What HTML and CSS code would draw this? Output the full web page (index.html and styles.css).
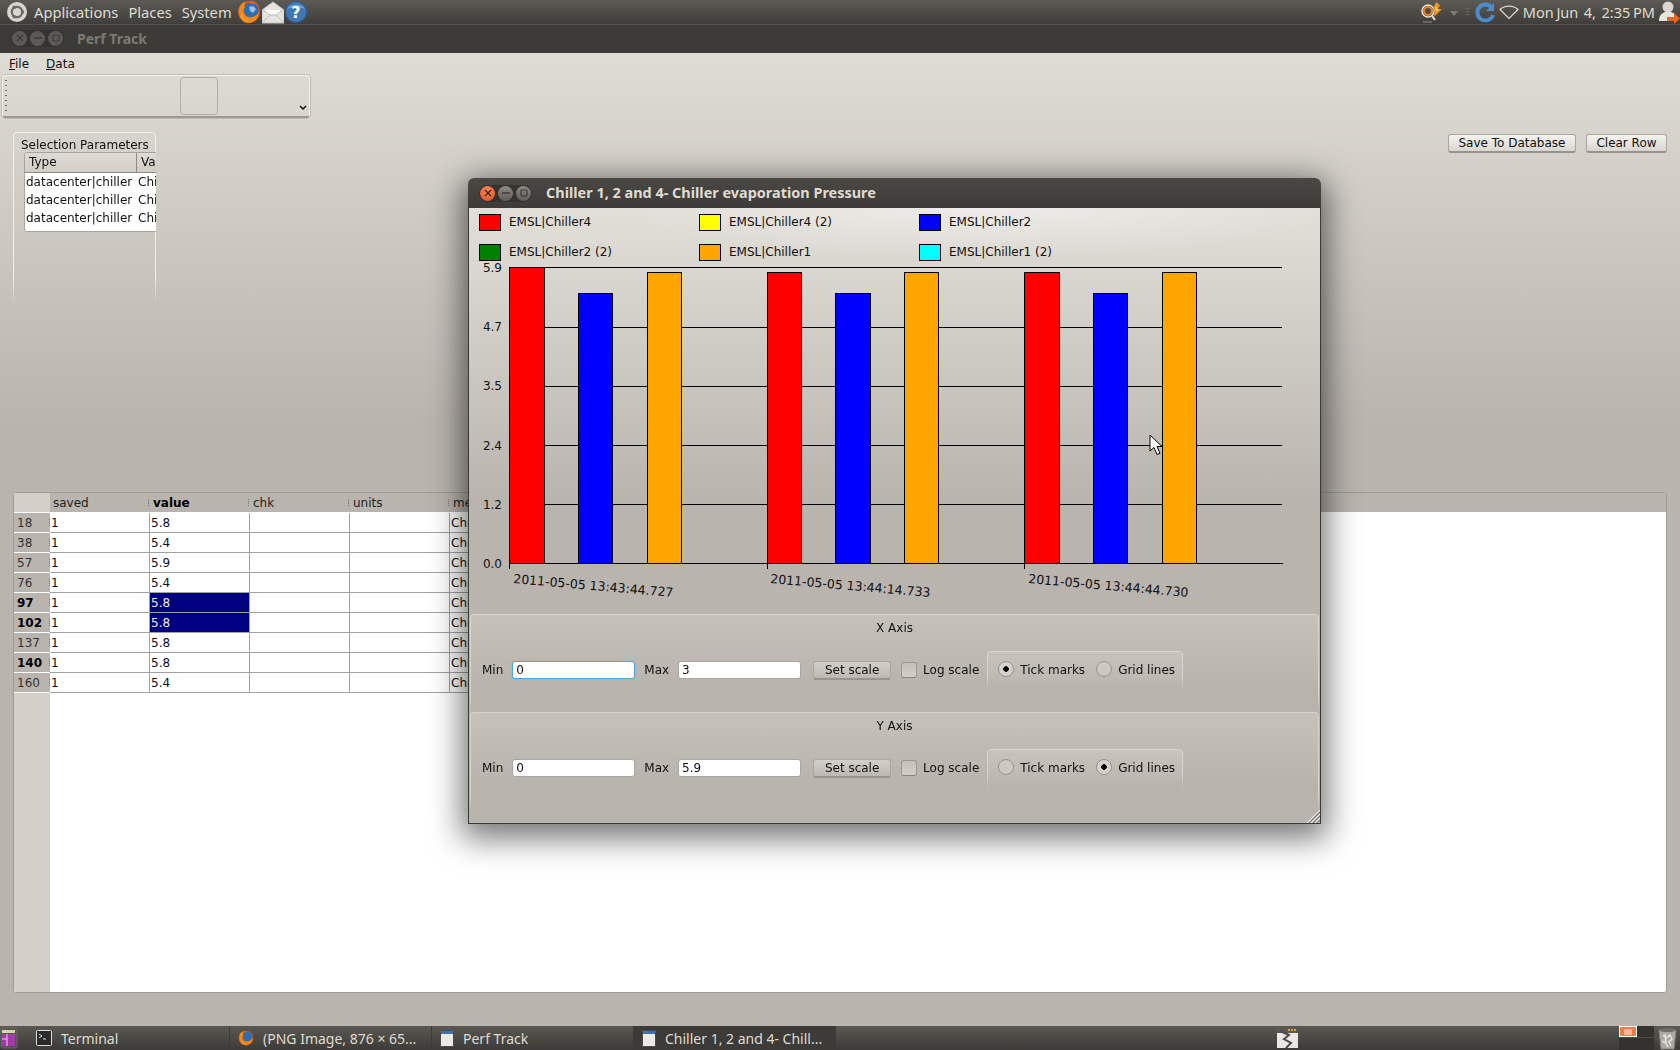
FILE: index.html
```html
<!DOCTYPE html>
<html lang="en-US">
<head>
	<meta charset="UTF-8">
	<title>Perf Track</title>
	<link rel="stylesheet" href="styles.css">
</head>
<body>

<!-- gnome top panel -->
<div class="panel">
	<svg class="ubuntu" width="24" height="24" viewBox="0 0 24 24"><circle cx="12" cy="12" r="10" fill="#d8d5ce"/><circle cx="12" cy="12" r="5.2" fill="none" stroke="#6a6862" stroke-width="2.2"/><circle cx="17.5" cy="12" r="1.7" fill="#6a6862"/><circle cx="9.2" cy="7.2" r="1.7" fill="#6a6862"/><circle cx="9.2" cy="16.8" r="1.7" fill="#6a6862"/></svg>
	<span class="panel-menu">Applications</span>
	<span class="panel-menu">Places</span>
	<span class="panel-menu">System</span>
	<svg class="launcher launcher-first" width="24" height="24" viewBox="0 0 24 24"><circle cx="12" cy="12" r="11" fill="#d9541a"/><circle cx="14" cy="10" r="7.500" fill="#2e6db4"/><path d="M12 7l4-1 3 3-3 4-3-2z" fill="#9fc3e2"/><path d="M2 11C2 5 6 2 9 2 7 4 7 6 8 7 6 9 6 13 9 16c4 3 10 1 13-4 0 6-5 11-11 11C6 23 2 18 2 11z" fill="#f08a1d"/><path d="M12 1c4-1 9 2 11 7-3-4-6-5-9-4z" fill="#e8601a"/><path d="M4 12c0 5 3 8 7 9-3 0-6-2-7-5z" fill="#f7c64a"/></svg>
	<svg class="launcher" width="22" height="24" viewBox="0 0 22 24"><path d="M0 10L11 2l11 8v13H0z" fill="#e6e4df" stroke="#c8c6c0"/><path d="M4 10h14v3l-5 2H9l-5-2z" fill="#fbfbf9"/><path d="M1 22l7-7h6l7 7M1 10l7 5M21 10l-7 5" fill="none" stroke="#bdbcb7"/></svg>
	<svg class="launcher" width="22" height="24" viewBox="0 0 22 24"><circle cx="11" cy="12" r="10.500" fill="#3f78b4" stroke="#2c5c90"/><path d="M2 9a10 8 0 0 1 18 0c-5-2-13-2-18 0z" fill="#6fa0d2"/><text x="11" y="18" class="help-mark">?</text></svg>

	<div class="panel-right">
		<svg width="24" height="22" viewBox="0 0 24 22"><circle cx="8" cy="10" r="6" fill="none" stroke="#e6e2d8" stroke-width="1.500"/><circle cx="8" cy="10" r="4" fill="none" stroke="#e9821e" stroke-width="2"/><path d="M12 15l3 4" stroke="#e6e2d8" stroke-width="2"/><path d="M3 21h9" stroke="#8e8c86"/><path d="M16 1l-4 9h3l-1 6 8-8h-4l2-4z" fill="#f0951c"/><path d="M16 5l-1 4h2l-1 2 3-3h-2z" fill="#fbe08a"/></svg>
		<span class="drop-arrow"></span>
		<span class="panel-grip"></span>
		<svg width="20" height="22" viewBox="0 0 20 22"><path d="M17 7a8 8 0 1 0 1 7" fill="none" stroke="#4d8ccb" stroke-width="4"/><path d="M11 10h8V2z" fill="#4d8ccb"/></svg>
		<svg class="wifi" width="20" height="16" viewBox="0 0 20 16"><path d="M1 5.500C6 1 14 1 19 5.500L10 14.500z" fill="none" stroke="#dcd8ce" stroke-width="1.200"/></svg>
		<span class="clock">Mon Jun  4,  2:35 PM</span>
		<svg width="22" height="24" viewBox="0 0 22 24"><circle cx="10" cy="7" r="5.500" fill="#d8d6d0"/><path d="M1 21c0-6 3-8 6-9h6c3 1 6 3 6 9z" fill="#e6e4df"/><path d="M9 17h7v-4l6 5.500-6 5.500v-3H9z" fill="#e2682a"/></svg>
	</div>
</div>

<!-- main window -->
<div class="titlebar">
	<div class="wm-buttons wm-off">
		<span class="wm-btn"><svg width="8" height="8" viewBox="0 0 8 8"><path d="M1 1l6 6M7 1L1 7" stroke="#3c3b37" stroke-width="1.200"/></svg></span>
		<span class="wm-btn"><svg width="8" height="8" viewBox="0 0 8 8"><path d="M0 4h8" stroke="#3c3b37" stroke-width="1.500"/></svg></span>
		<span class="wm-btn"><svg width="8" height="8" viewBox="0 0 8 8"><rect x="1" y="1" width="6" height="6" rx="1" fill="none" stroke="#3c3b37" stroke-width="1.200"/></svg></span>
	</div>
	<span class="title-off">Perf Track</span>
</div>

<div class="mainwin">
	<div class="menubar">
		<span class="menu-item"><u>F</u>ile</span>
		<span class="menu-item"><u>D</u>ata</span>
	</div>

	<div class="toolbar">
		<span class="tool-grip"></span>
		<span class="tool-btn"></span>
		<svg class="tool-more" width="8" height="6" viewBox="0 0 8 6"><path d="M1 1l3 3 3-3" fill="none" stroke="#111" stroke-width="1.500"/></svg>
	</div>

	<div class="upper">
		<div class="params">
			<div class="params-title">Selection Parameters</div>
			<div class="params-table">
				<div class="pt-head"><span class="pt-type">Type</span><span class="pt-val">Val</span></div>
				<div class="pt-row"><span class="pt-type">datacenter|chiller</span><span class="pt-val">Chi</span></div>
				<div class="pt-row"><span class="pt-type">datacenter|chiller</span><span class="pt-val">Chi</span></div>
				<div class="pt-row"><span class="pt-type">datacenter|chiller</span><span class="pt-val">Chi</span></div>
			</div>
		</div>
		<div class="actions">
			<button class="btn btn-save">Save To Database</button>
			<button class="btn btn-clear">Clear Row</button>
		</div>
	</div>

	<div class="datagrid">
		<div class="dg-head">
			<span class="dg-corner"></span>
			<span class="dg-col">saved</span>
			<span class="dg-col dg-col-on">value</span>
			<span class="dg-col">chk</span>
			<span class="dg-col">units</span>
			<span class="dg-col">me</span>
			<span class="dg-fill"></span>
		</div>
		<div class="dg-row"><span class="dg-num">18</span><span class="dg-cell">1</span><span class="dg-cell">5.8</span><span class="dg-cell"></span><span class="dg-cell"></span><span class="dg-cell">Chi</span></div>
		<div class="dg-row"><span class="dg-num">38</span><span class="dg-cell">1</span><span class="dg-cell">5.4</span><span class="dg-cell"></span><span class="dg-cell"></span><span class="dg-cell">Chi</span></div>
		<div class="dg-row"><span class="dg-num">57</span><span class="dg-cell">1</span><span class="dg-cell">5.9</span><span class="dg-cell"></span><span class="dg-cell"></span><span class="dg-cell">Chi</span></div>
		<div class="dg-row"><span class="dg-num">76</span><span class="dg-cell">1</span><span class="dg-cell">5.4</span><span class="dg-cell"></span><span class="dg-cell"></span><span class="dg-cell">Chi</span></div>
		<div class="dg-row"><span class="dg-num dg-num-on">97</span><span class="dg-cell">1</span><span class="dg-cell dg-sel">5.8</span><span class="dg-cell"></span><span class="dg-cell"></span><span class="dg-cell">Chi</span></div>
		<div class="dg-row"><span class="dg-num dg-num-on">102</span><span class="dg-cell">1</span><span class="dg-cell dg-sel">5.8</span><span class="dg-cell"></span><span class="dg-cell"></span><span class="dg-cell">Chi</span></div>
		<div class="dg-row"><span class="dg-num">137</span><span class="dg-cell">1</span><span class="dg-cell">5.8</span><span class="dg-cell"></span><span class="dg-cell"></span><span class="dg-cell">Chi</span></div>
		<div class="dg-row"><span class="dg-num dg-num-on">140</span><span class="dg-cell">1</span><span class="dg-cell">5.8</span><span class="dg-cell"></span><span class="dg-cell"></span><span class="dg-cell">Chi</span></div>
		<div class="dg-row"><span class="dg-num">160</span><span class="dg-cell">1</span><span class="dg-cell">5.4</span><span class="dg-cell"></span><span class="dg-cell"></span><span class="dg-cell">Chi</span></div>
		<div class="dg-rest"><span class="dg-rest-side"></span></div>
	</div>
</div>

<!-- bottom panel -->
<div class="taskbar">
	<svg class="show-desktop" width="18" height="24" viewBox="0 0 18 24"><rect x="1" y="2" width="16" height="20" rx="2" fill="#55534e" stroke="#6b6964"/><rect x="2" y="4" width="13" height="3" fill="#d8d6a8"/><rect x="2" y="8" width="13" height="12" fill="#a23aa8"/><path d="M7 8v12M2 13h5" stroke="#e9cbe9"/></svg>
	<span class="task-grip"></span>
	<div class="task">
		<svg width="16" height="16" viewBox="0 0 16 16"><rect x=".5" y=".5" width="15" height="15" rx="1" fill="#2b2b2b" stroke="#ddd"/><path d="M3 4l3 2-3 2M7 9h3" stroke="#ddd" fill="none"/></svg>
		<span>Terminal</span>
	</div>
	<div class="task">
		<svg width="16" height="18" viewBox="0 0 24 24"><circle cx="12" cy="12" r="11" fill="#d9541a"/><circle cx="14" cy="10" r="7.500" fill="#2e6db4"/><path d="M2 11C2 5 6 2 9 2 7 4 7 6 8 7 6 9 6 13 9 16c4 3 10 1 13-4 0 6-5 11-11 11C6 23 2 18 2 11z" fill="#f08a1d"/></svg>
		<span>(PNG Image, 876 × 65...</span>
	</div>
	<div class="task">
		<svg width="14" height="17" viewBox="0 0 14 17"><rect x=".5" y=".5" width="13" height="16" rx="1" fill="#eceae6" stroke="#4a4945"/><rect x="1" y="1" width="12" height="3" fill="#3f72b8"/></svg>
		<span>Perf Track</span>
	</div>
	<div class="task task-on">
		<svg width="14" height="17" viewBox="0 0 14 17"><rect x=".5" y=".5" width="13" height="16" rx="1" fill="#eceae6" stroke="#4a4945"/><rect x="1" y="1" width="12" height="3" fill="#3f72b8"/></svg>
		<span>Chiller 1, 2 and 4- Chill...</span>
	</div>
	<div class="task-right">
		<svg class="zigzag" width="21" height="20" viewBox="0 0 21 20"><rect width="21" height="20" fill="#e9e8e4"/><rect width="21" height="5" fill="#5a5853"/><rect x="11" y="1" width="2" height="2" fill="#e0a040"/><rect x="14" y="1" width="2" height="2" fill="#e0a040"/><rect x="17" y="1" width="2" height="2" fill="#e0a040"/><path d="M3 3l9 4-5 4 7 4-5 5" fill="none" stroke="#4c4b47" stroke-width="2"/></svg>
		<div class="workspaces">
			<span class="ws ws-on"><i></i></span><span class="ws"></span>
			<span class="ws"></span><span class="ws"></span>
		</div>
		<svg width="19" height="23" viewBox="0 0 19 23"><path d="M1 3h17l-2 19H3z" fill="#a9a8a3" stroke="#85847f"/><ellipse cx="9.500" cy="3" rx="8.500" ry="2" fill="#6f6e69"/><path d="M5 8l3 3 4-3 2 4-3 3 2 4M4 14l4 2 2 4M7 7l1 9" fill="none" stroke="#e4e3de" stroke-width="1.500"/></svg>
	</div>
</div>

<!-- chart dialog, a window on the desktop -->
<div class="dialog">
	<div class="dlg-title">
		<div class="wm-buttons">
			<span class="wm-btn wm-close"><svg width="8" height="8" viewBox="0 0 8 8"><path d="M1 1l6 6M7 1L1 7" stroke="#3c2015" stroke-width="1.300"/></svg></span>
			<span class="wm-btn wm-mid"><svg width="8" height="8" viewBox="0 0 8 8"><path d="M0 4h8" stroke="#3c3b37" stroke-width="1.500"/></svg></span>
			<span class="wm-btn wm-mid"><svg width="8" height="8" viewBox="0 0 8 8"><rect x="1" y="1" width="6" height="6" rx="1" fill="none" stroke="#3c3b37" stroke-width="1.200"/></svg></span>
		</div>
		<span class="title-on">Chiller 1, 2 and 4- Chiller evaporation Pressure</span>
	</div>
	<div class="dlg-body">
		<div class="legend">
			<div class="lg-item"><span class="swatch c-red"></span>EMSL|Chiller4</div>
			<div class="lg-item"><span class="swatch c-yellow"></span>EMSL|Chiller4 (2)</div>
			<div class="lg-item"><span class="swatch c-blue"></span>EMSL|Chiller2</div>
			<div class="lg-item"><span class="swatch c-green"></span>EMSL|Chiller2 (2)</div>
			<div class="lg-item"><span class="swatch c-orange"></span>EMSL|Chiller1</div>
			<div class="lg-item"><span class="swatch c-cyan"></span>EMSL|Chiller1 (2)</div>
		</div>

		<svg class="chart" width="849" height="354" viewBox="470 260 849 354" shape-rendering="crispEdges">
			<g stroke="#000" fill="none">
				<path d="M509.500 267.500H1282M509.500 327.500H1282M509.500 386.500H1282M509.500 445.500H1282M509.500 504.500H1282"/>
				<path d="M509.500 563.500H1283M509.500 563v6M767.500 563v6M1024.500 563v6"/>
				<rect x="509.500" y="267.500" width="35" height="296" fill="#f00"/>
				<rect x="578.500" y="293.500" width="34" height="270" fill="#00f"/>
				<rect x="647.500" y="272.500" width="34" height="291" fill="#ffa500"/>
				<rect x="767.500" y="272.500" width="34" height="291" fill="#f00"/>
				<rect x="835.500" y="293.500" width="35" height="270" fill="#00f"/>
				<rect x="904.500" y="272.500" width="34" height="291" fill="#ffa500"/>
				<rect x="1024.500" y="272.500" width="35" height="291" fill="#f00"/>
				<rect x="1093.500" y="293.500" width="34" height="270" fill="#00f"/>
				<rect x="1162.500" y="272.500" width="34" height="291" fill="#ffa500"/>
			</g>
			<g class="ylabels">
				<text x="502" y="272">5.9</text>
				<text x="502" y="331">4.7</text>
				<text x="502" y="390">3.5</text>
				<text x="502" y="450">2.4</text>
				<text x="502" y="509">1.2</text>
				<text x="502" y="568">0.0</text>
			</g>
			<g class="xlabels">
				<text transform="translate(513 583) rotate(5)">2011-05-05 13:43:44.727</text>
				<text transform="translate(770 583) rotate(5)">2011-05-05 13:44:14.733</text>
				<text transform="translate(1028 583) rotate(5)">2011-05-05 13:44:44.730</text>
			</g>
		</svg>

		<div class="axisbox">
			<div class="axis-title">X Axis</div>
			<div class="axis-row">
				<label class="lbl">Min</label><input class="field field-focus" value="0">
				<label class="lbl lbl-max">Max</label><input class="field" value="3">
				<button class="btn btn-scale">Set scale</button>
				<input type="checkbox" class="check"><span class="lbl">Log scale</span>
				<div class="radios">
					<input type="radio" name="xmode" class="radio" checked><span class="lbl">Tick marks</span>
					<input type="radio" name="xmode" class="radio"><span class="lbl">Grid lines</span>
				</div>
			</div>
		</div>

		<div class="axisbox">
			<div class="axis-title">Y Axis</div>
			<div class="axis-row">
				<label class="lbl">Min</label><input class="field" value="0">
				<label class="lbl lbl-max">Max</label><input class="field" value="5.9">
				<button class="btn btn-scale">Set scale</button>
				<input type="checkbox" class="check"><span class="lbl">Log scale</span>
				<div class="radios">
					<input type="radio" name="ymode" class="radio"><span class="lbl">Tick marks</span>
					<input type="radio" name="ymode" class="radio" checked><span class="lbl">Grid lines</span>
				</div>
			</div>
		</div>

		<svg class="resize-grip" width="14" height="14" viewBox="0 0 14 14"><path d="M14 1L1 14M14 5L5 14M14 9L9 14" stroke="#f2f0ec" stroke-width="1"/><path d="M14 3L3 14M14 7L7 14M14 11L11 14" stroke="#77746e" stroke-width="1"/></svg>
	</div>
</div>

<svg class="cursor" width="14" height="22" viewBox="0 0 14 22"><path d="M1 1v16l4-3.500 3 7 3-1.200-3-6.800h5z" fill="#fff" stroke="#000" stroke-width="1"/></svg>

</body>
</html>
```

FILE: styles.css
```css
* {
box-sizing: border-box;
}

html, body {
height: 100%;
}

body {
margin: 0;
display: flex;
flex-direction: column;
overflow: hidden;
font-family: "DejaVu Sans", sans-serif;
font-size: 12px;
color: #111;
background: #b9b4ae;
}

/* top panel */
.panel {
display: flex;
align-items: center;
flex: 0 0 24px;
padding-left: 5px;
font-family: "Noto Sans", sans-serif;
font-size: 14.700px;
color: #dfdbd2;
background: linear-gradient(#5c5a55, #3f3e3a);
}

.ubuntu {
margin-right: 5px;
}

.panel-menu {
margin-right: 10px;
}

.launcher {
margin-right: 1px;
}

.launcher-first {
margin-left: -5px;
}

.help-mark {
font: bold 16px "DejaVu Sans", sans-serif;
text-anchor: middle;
fill: #fff;
}

.panel-right {
display: flex;
align-items: center;
gap: 3px;
margin-left: auto;
}

.drop-arrow {
width: 0;
height: 0;
margin: 3px 2px 0 3px;
border: 4px solid transparent;
border-top: 5px solid #7d7b75;
border-bottom: 0;
}

.panel-grip {
width: 3px;
height: 8px;
margin: 0 3px;
background: repeating-linear-gradient(#6e6c66 0 1px, transparent 1px 3px);
}

.wifi {
margin: 0 1px;
}

.clock {
font-size: 14.500px;
white-space: pre;
word-spacing: -1px;
}

/* window titles */
.titlebar {
display: flex;
align-items: center;
flex: 0 0 29px;
padding-bottom: 2px;
background: #3c3b37;
border-top: 1px solid #55534e;
}

.wm-buttons {
display: flex;
gap: 3px;
margin-left: 11px;
padding: 1px;
border-radius: 9px;
background: #34332f;
}

.wm-btn {
display: flex;
align-items: center;
justify-content: center;
width: 15px;
height: 15px;
border-radius: 50%;
background: #5c5a56;
}

.wm-close {
background: radial-gradient(circle at 50% 30%, #f58a58, #d9501e);
}

.wm-mid {
background: linear-gradient(#8b8a84, #5f5d58);
}

.title-off, .title-on {
font-family: "Noto Sans", sans-serif;
font-weight: bold;
}

.title-off {
margin-left: 13px;
font-size: 14px;
color: #7c7a73;
}

.title-on {
margin: 0 0 2px 14px;
font-size: 14.450px;
color: #dfdbd2;
}

/* main window */
.mainwin {
display: flex;
flex-direction: column;
flex: 1;
min-height: 0;
background: linear-gradient(#dfdcd5, #b9b4ae 370px);
}

.menubar {
display: flex;
flex: 0 0 22px;
align-items: center;
padding-left: 9px;
gap: 17px;
}

.toolbar {
display: flex;
align-items: center;
flex: 0 0 43px;
width: 308px;
margin-left: 2px;
padding-left: 1px;
border: 1px solid #f2f0ec;
border-bottom: 2px solid #9e9a93;
border-radius: 4px;
box-shadow: 0 0 0 1px rgba(120, 115, 105, .25);
}

.tool-grip {
width: 4px;
height: 36px;
background: radial-gradient(circle, #77736c 0 .7px, transparent 1px) 0 0 / 4px 5px;
}

.tool-btn {
width: 38px;
height: 38px;
margin-left: 172px;
border: 1px solid #b1ada5;
border-radius: 4px;
}

.tool-more {
align-self: flex-end;
margin: 0 0 5px 81px;
}

.upper {
display: flex;
justify-content: space-between;
align-items: flex-start;
flex: 0 0 360px;
margin-top: 14px;
padding: 0 13px;
}

.params {
width: 143px;
height: 173px;
padding-top: 4px;
border: 1px solid #f2f0ec;
border-bottom: 0;
border-radius: 4px 4px 0 0;
-webkit-mask-image: linear-gradient(#000 145px, transparent);
mask-image: linear-gradient(#000 145px, transparent);
}

.params-title {
height: 15px;
padding-left: 7px;
line-height: 16px;
white-space: nowrap;
}

.params-table {
width: 134px;
height: 80px;
margin-left: 10px;
overflow: hidden;
border: 1px solid #a8a49c;
border-radius: 3px;
background: #fff;
}

.pt-head, .pt-row {
display: flex;
white-space: nowrap;
}

.pt-head {
height: 20px;
line-height: 19px;
border-bottom: 1px solid #8f8b84;
background: linear-gradient(#dedbd4, #d2cec7);
}

.pt-row {
height: 18px;
line-height: 18px;
}

.pt-type {
flex: 0 0 112px;
}

.pt-head .pt-type {
padding-left: 4px;
border-right: 1px solid #8f8b84;
}

.pt-row .pt-type {
padding-left: 1px;
}

.pt-val {
padding-left: 1px;
}

.pt-head .pt-val {
padding-left: 4px;
}

.actions {
display: flex;
gap: 10px;
margin-top: 2px;
}

.btn {
height: 19px;
padding: 0;
font: 12px "DejaVu Sans", sans-serif;
color: #111;
border: 1px solid #aaa69e;
border-bottom: 2px solid #98948d;
border-radius: 3px;
background: linear-gradient(#f5f3ef, #d9d6cf);
}

.btn-save {
width: 128px;
}

.btn-clear {
width: 81px;
}

/* data table */
.datagrid {
display: flex;
flex-direction: column;
flex: 1;
min-height: 0;
margin: 0 13px 33px 13px;
border: 1px solid #a09c95;
border-radius: 3px;
background: #fff;
}

.dg-head, .dg-row {
display: flex;
flex: 0 0 20px;
height: 20px;
}

.dg-head {
background: #b9b4ae;
border-bottom: 1px solid #fff;
}

.dg-corner {
flex: 0 0 36px;
background: #d4d0c8;
}

.dg-col {
flex: 0 0 100px;
height: 19px;
padding-left: 3px;
line-height: 21px;
color: #222;
background: repeating-linear-gradient(#77736c 0 1px, transparent 1px 2px) right 1px center / 1px 8px no-repeat;
}

.dg-col-on {
font-weight: bold;
color: #000;
}

.dg-fill {
flex: 1;
}

.dg-num {
flex: 0 0 36px;
padding-left: 3px;
line-height: 20px;
color: #333;
border-bottom: 1px solid #fff;
background: repeating-linear-gradient(#77736c 0 1px, transparent 1px 2px) right 0 center / 1px 8px no-repeat #b9b4ae;
}

.dg-num-on {
font-weight: bold;
color: #000;
}

.dg-cell {
flex: 0 0 100px;
padding-left: 1px;
line-height: 20px;
border-right: 1px solid #a0a0a0;
border-bottom: 1px solid #a0a0a0;
}

.dg-sel {
color: #eee;
background: #000080;
}

.dg-rest {
display: flex;
flex: 1;
}

.dg-rest-side {
flex: 0 0 36px;
background: #d4d0c8;
}

/* bottom panel */
.taskbar {
display: flex;
align-items: center;
flex: 0 0 24px;
font-family: "Noto Sans", sans-serif;
font-size: 14px;
color: #dfdbd2;
background: linear-gradient(#5a5853, #3c3b37);
}

.show-desktop {
flex: none;
}

.task-grip {
flex: 0 0 10px;
}

.task {
display: flex;
align-items: center;
gap: 9px;
flex: 0 0 202px;
height: 24px;
padding-left: 8px;
white-space: nowrap;
border-right: 1px solid #3c3b37;
}

.task-on {
background: #3c3b37;
}

.task-right {
display: flex;
align-items: center;
flex: 1;
padding-left: 441px;
}

.zigzag {
margin-right: 321px;
}

.workspaces {
display: grid;
grid-template-columns: 18px 17px;
grid-template-rows: 11px 12px;
gap: 1px 0;
margin-right: 4px;
}

.ws {
background: #33322e;
}

.ws-on {
display: flex;
align-items: center;
justify-content: center;
border: 1px solid #fff;
background: #ee7c4a;
}

.ws-on i {
width: 8px;
height: 6px;
background: #f8b598;
}

/* chart dialog */
.dialog {
position: absolute;
left: 468px;
top: 178px;
display: flex;
flex-direction: column;
width: 853px;
height: 646px;
border-radius: 6px 6px 0 0;
box-shadow: 0 8px 32px 6px rgba(0, 0, 0, .55);
}

.dlg-title {
display: flex;
align-items: center;
flex: 0 0 30px;
border-radius: 6px 6px 0 0;
background: linear-gradient(#4a4844, #3c3b37);
}

.dlg-title .wm-buttons {
margin-left: 11px;
}

.dlg-body {
position: relative;
flex: 1;
padding: 0 1px;
border: 1px solid #3a3935;
border-top: 0;
background: radial-gradient(ellipse 360px 50px at 60% 0, rgba(255, 255, 255, .4), transparent), linear-gradient(#e2dfd9, #b9b4ae 290px);
}

.legend {
display: grid;
grid-template-columns: repeat(3, 220px);
grid-auto-rows: 30px;
height: 52px;
padding: 6px 0 0 9px;
}

.lg-item {
display: flex;
align-items: flex-start;
height: 17px;
line-height: 17px;
white-space: nowrap;
}

.swatch {
flex: 0 0 22px;
height: 17px;
margin-right: 8px;
border: 1px solid #000;
}

.c-red { background: #f00; }
.c-yellow { background: #ff0; }
.c-blue { background: #00f; }
.c-green { background: #008000; }
.c-orange { background: #ffa500; }
.c-cyan { background: #0ff; }

.chart {
display: block;
font-size: 12px;
}

.ylabels text {
text-anchor: end;
fill: #111;
}

.xlabels text {
font-size: 12.500px;
fill: #111;
}

.axisbox {
height: 98px;
padding-top: 5px;
border: 1px solid #d8d5ce;
border-bottom: 0;
border-radius: 4px 4px 0 0;
background: linear-gradient(#c6c2ba, #b8b3ac 72px);
-webkit-mask-image: linear-gradient(#000 80px, transparent);
mask-image: linear-gradient(#000 80px, transparent);
}

.axis-title {
height: 16px;
line-height: 16px;
text-align: center;
}

.axis-row {
display: flex;
align-items: flex-start;
margin-top: 13px;
padding-left: 11px;
}

.lbl {
margin-top: 14px;
line-height: 14px;
white-space: nowrap;
}

.lbl-max {
margin-left: 9px;
}

.field {
width: 123px;
height: 18px;
margin: 12px 0 0 9px;
padding: 0 3px;
font: 12px "DejaVu Sans", sans-serif;
color: #111;
border: 1px solid #aaa69e;
border-radius: 3px;
background: #fff;
outline: 0;
}

.field-focus {
border: 1px solid #4aa5dc;
box-shadow: 0 0 1px #4aa5dc;
}

.btn-scale {
width: 78px;
margin: 12px 10px 0 12px;
background: linear-gradient(#d3d0c9, #bcb8b1);
}

.check {
appearance: none;
width: 16px;
height: 16px;
margin: 13px 6px 0 0;
border: 1px solid #9c9890;
border-bottom-color: #87837c;
border-radius: 3px;
background: linear-gradient(#c4c0b9, #d2cfc8);
}

.radios {
display: flex;
align-items: flex-start;
width: 196px;
height: 40px;
margin: 2px 0 0 8px;
padding-left: 10px;
border: 1px solid #d8d5ce;
border-bottom: 0;
border-radius: 4px 4px 0 0;
background: linear-gradient(#c8c4bc, #b9b4ae);
-webkit-mask-image: linear-gradient(#000 26px, transparent);
mask-image: linear-gradient(#000 26px, transparent);
}

.radios .lbl {
margin-top: 11px;
margin-right: 11px;
}

.radio {
appearance: none;
flex: none;
width: 16px;
height: 16px;
margin: 9px 6px 0 0;
border: 1px solid #98948c;
border-radius: 50%;
background: #cdc9c2;
}

.radio:checked {
background: radial-gradient(circle, #000 0 2.500px, #d5d2cb 3px);
}

.resize-grip {
position: absolute;
right: 0;
bottom: 0;
}

.cursor {
position: absolute;
left: 1149px;
top: 434px;
}
```
